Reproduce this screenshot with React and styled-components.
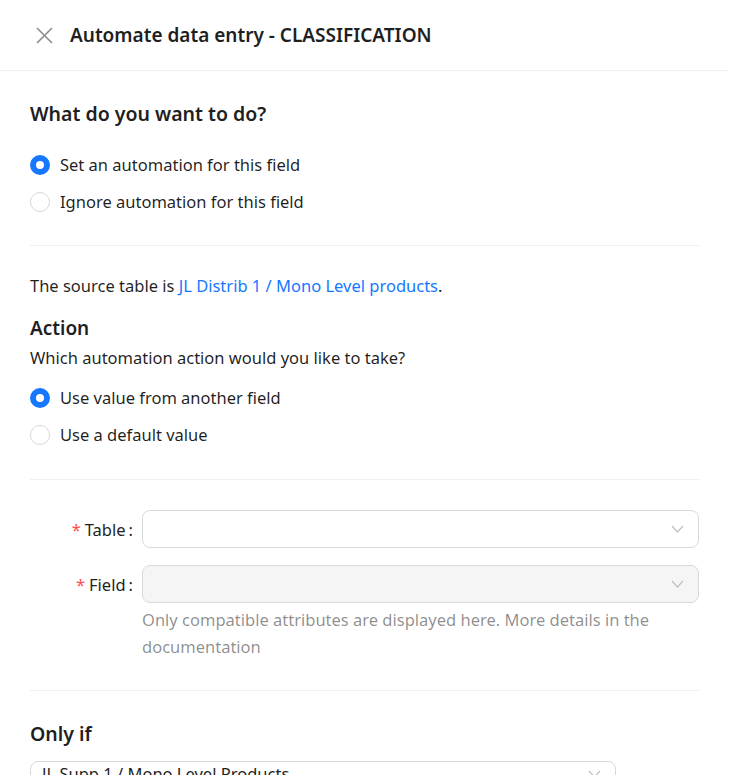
import React from "react";
import styled, { createGlobalStyle } from "styled-components";

const GlobalStyle = createGlobalStyle`
  html, body {
    margin: 0;
    padding: 0;
    background: #fff;
    font-family: "Noto Sans", "Open Sans", sans-serif;
    color: rgba(0, 0, 0, 0.88);
  }
`;

const Drawer = styled.div`
  width: 729px;
  height: 775px;
  overflow: hidden;
  background: #fff;
`;

const Header = styled.header`
  height: 71px;
  box-sizing: border-box;
  display: flex;
  align-items: center;
  gap: 17px;
  padding: 0 30px 0 36px;
  border-bottom: 1px solid #f0f0f0;
`;

const CloseButton = styled.button`
  border: 0;
  background: none;
  padding: 0;
  width: 17px;
  height: 17px;
  display: flex;
  cursor: pointer;
`;

const Title = styled.h1`
  margin: 0;
  font-size: 19px;
  font-weight: 600;
  color: #1f1f1f;
`;

const Body = styled.div`
  padding: 0 30px;
`;

const Section = styled.section`
  padding: ${(p) => p.$pad || "24px 0"};
  border-bottom: ${(p) => (p.$last ? "0" : "1px solid #f0f0f0")};
`;

const Heading = styled.h2`
  margin: 0 0 ${(p) => p.$gap || "8px"};
  font-size: ${(p) => p.$size || "19.5px"};
  font-weight: 600;
  line-height: 30px;
  color: #1f1f1f;
`;

const Text = styled.p`
  margin: 0 0 ${(p) => p.$gap || "0"};
  font-size: 16.5px;
  line-height: 28px;
`;

const Link = styled.a`
  color: #1677ff;
  text-decoration: none;
`;

const RadioGroup = styled.div`
  display: flex;
  flex-direction: column;
  gap: 9px;
  margin-top: ${(p) => p.$top || "0"};
`;

const RadioLabel = styled.label`
  display: flex;
  align-items: center;
  gap: 10px;
  font-size: 16.5px;
  line-height: 28px;
  cursor: pointer;
`;

const RadioDot = styled.span`
  width: 20px;
  height: 20px;
  box-sizing: border-box;
  border-radius: 50%;
  border: ${(p) => (p.$checked ? "6px solid #1677ff" : "1px solid #d9d9d9")};
  background: #fff;
  flex: none;
`;

const FormRow = styled.div`
  display: grid;
  grid-template-columns: 103px 1fr;
  column-gap: 9px;
  align-items: start;
  margin-bottom: ${(p) => p.$gap || "0"};
`;

const Label = styled.label`
  display: flex;
  justify-content: flex-end;
  align-items: center;
  height: 38px;
  font-size: 16.5px;
  color: #1f1f1f;

  &::before {
    content: "*";
    color: #ff4d4f;
    margin-right: 4px;
  }
  &::after {
    content: ":";
    margin-left: 3px;
  }
`;

const Select = styled.div`
  height: 38px;
  box-sizing: border-box;
  border: 1px solid #d9d9d9;
  border-radius: 8px;
  background: ${(p) => (p.$disabled ? "#f5f5f5" : "#fff")};
  display: flex;
  align-items: center;
  justify-content: space-between;
  padding: 0 14px 0 11px;
  font-size: 16.5px;
  color: #1f1f1f;
  white-space: nowrap;
  overflow: hidden;
`;

/* tall multi-value select, its content sits at the top */
const ConditionSelect = styled(Select)`
  width: 586px;
  height: 44px;
  align-items: flex-start;
  padding-top: 1px;
  line-height: 22px;

  svg {
    margin-top: 7px;
  }
`;

const Help = styled.div`
  font-size: 16.5px;
  line-height: 27px;
  color: rgba(0, 0, 0, 0.45);
  margin-top: 3px;
`;

const Chevron = () => (
  <svg width="13" height="8" viewBox="0 0 13 8" fill="none">
    <path d="M1 1l5.5 6L12 1" stroke="#bfbfbf" strokeWidth="1.2" />
  </svg>
);

const Radio = ({ checked, children }) => (
  <RadioLabel>
    <RadioDot $checked={checked} />
    {children}
  </RadioLabel>
);

export default function App() {
  return (
    <>
      <GlobalStyle />
      <Drawer>
        <Header>
          <CloseButton aria-label="Close">
            <svg width="17" height="17" viewBox="0 0 17 17">
              <path d="M1 1l15 15M16 1L1 16" stroke="#8c8c8c" strokeWidth="1.6" />
            </svg>
          </CloseButton>
          <Title>Automate data entry - CLASSIFICATION</Title>
        </Header>
        <Body>
          <Section $pad="28px 0 29px">
            <Heading $gap="22px">What do you want to do?</Heading>
            <RadioGroup>
              <Radio checked>Set an automation for this field</Radio>
              <Radio>Ignore automation for this field</Radio>
            </RadioGroup>
          </Section>
          <Section $pad="26px 0 30px">
            <Text $gap="13px">
              The source table is <Link href="#0">JL Distrib 1 / Mono Level products</Link>.
            </Text>
            <Heading $size="19px" $gap="1px">Action</Heading>
            <Text>Which automation action would you like to take?</Text>
            <RadioGroup $top="12px">
              <Radio checked>Use value from another field</Radio>
              <Radio>Use a default value</Radio>
            </RadioGroup>
          </Section>
          <Section $pad="30px 0 30px">
            <FormRow $gap="17px">
              <Label>Table</Label>
              <Select>
                <span />
                <Chevron />
              </Select>
            </FormRow>
            <FormRow>
              <Label>Field</Label>
              <div>
                <Select $disabled>
                  <span />
                  <Chevron />
                </Select>
                <Help>
                  Only compatible attributes are displayed here. More details in the documentation
                </Help>
              </div>
            </FormRow>
          </Section>
          <Section $pad="28px 0" $last>
            <Heading $size="19.5px" $gap="12px">Only if</Heading>
            <ConditionSelect>
              <span>JL Supp 1 / Mono Level Products</span>
              <Chevron />
            </ConditionSelect>
          </Section>
        </Body>
      </Drawer>
    </>
  );
}
